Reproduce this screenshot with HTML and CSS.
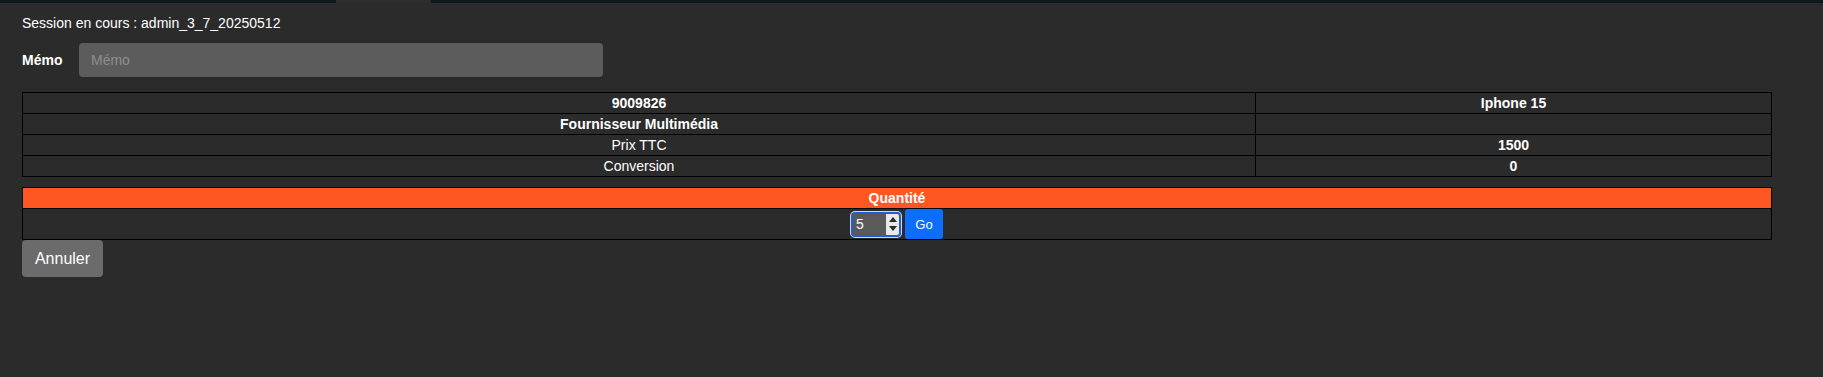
FILE: index.html
```html
<!DOCTYPE html>
<html lang="fr">
<head>
    <meta charset="UTF-8">
    <meta name="viewport" content="width=device-width, initial-scale=1.0">
    <title>Session</title>
    <link rel="stylesheet" href="styles.css">
</head>
<body>

    <div class="topbar">
        <div class="seg"></div>
        <div class="seg active"></div>
        <div class="seg rest"></div>
    </div>

    <div class="page">
        <div class="session">Session en cours : admin_3_7_20250512</div>

        <div class="memo-row">
            <label for="memo">Mémo</label>
            <input type="text" id="memo" class="memo-input" placeholder="Mémo">
        </div>

        <table class="info">
            <colgroup>
                <col class="col-main">
                <col>
            </colgroup>
            <tr><td class="b">9009826</td><td class="b">Iphone 15</td></tr>
            <tr><td class="b">Fournisseur Multimédia</td><td></td></tr>
            <tr><td>Prix TTC</td><td class="b">1500</td></tr>
            <tr><td>Conversion</td><td class="b">0</td></tr>
        </table>

        <table class="qty">
            <tr><th>Quantité</th></tr>
            <tr>
                <td>
                    <div class="qty-form">
                        <span class="num">
                            <input type="text" class="num-input" value="5">
                            <span class="spin">
                                <svg width="10" height="18" viewBox="0 0 10 18">
                                    <path d="M1 7 L5 2 L9 7 Z" fill="#2a2a2a"/>
                                    <path d="M1 11 L5 16 L9 11 Z" fill="#2a2a2a"/>
                                </svg>
                            </span>
                        </span>
                        <button class="btn-go">Go</button>
                    </div>
                </td>
            </tr>
        </table>

        <button class="btn-cancel">Annuler</button>
    </div>

</body>
</html>
```

FILE: styles.css
```css
body {
    margin: 0;
    background-color: #2b2b2b;
    color: white;
    font-family: "Liberation Sans", Arial, sans-serif;
    font-size: 14px;
}
.topbar {
    display: flex;
    height: 3px;
}
.seg { width: 336px; background: #0c1a1c; }
.seg.active { width: 95px; background: #2d2d2d; }
.seg.rest { flex: 1; }

.page { padding: 12px 0 0 22px; }
.session { line-height: 16px; }

.memo-row {
    display: flex;
    align-items: center;
    margin-top: 12px;
}
.memo-row label {
    width: 57px;
    font-weight: bold;
}
.memo-input {
    width: 524px;
    height: 34px;
    box-sizing: border-box;
    padding: 0 12px;
    background: #5c5c5c;
    border: none;
    border-radius: 4px;
    color: white;
    font-family: inherit;
    font-size: 14px;
}
.memo-input::placeholder { color: #8e8e8e; }

table {
    width: 1750px;
    border-collapse: collapse;
}
td, th {
    border: 1px solid #000;
    text-align: center;
    padding: 0;
    line-height: 20px;
}
.b { font-weight: bold; }
.info { margin-top: 15px; }
.col-main { width: 70.5%; }

.qty { margin-top: 10px; }
.qty th { background: #ff5722; font-weight: bold; }
.qty-form {
    display: flex;
    justify-content: center;
    align-items: center;
    gap: 4px;
    height: 30px;
}
.num {
    display: inline-flex;
    width: 50px;
    height: 25px;
    box-sizing: border-box;
    border: 2px solid #1d5fd2;
    border-radius: 4px;
    box-shadow: 0 0 0 1px #d8d8d8;
    overflow: hidden;
    background: #5a5a5a;
}
.num-input {
    width: 30px;
    border: none;
    padding: 0 0 0 3px;
    background: #5a5a5a;
    color: white;
    font-family: inherit;
    font-size: 14px;
    outline: none;
}
.spin {
    width: 16px;
    background: #e9e9e9;
    display: flex;
    align-items: center;
    justify-content: center;
}
.btn-go {
    width: 38px;
    height: 30px;
    border: none;
    border-radius: 3px;
    background: #0d6efd;
    color: white;
    font-family: inherit;
    font-size: 13px;
}
.btn-cancel {
    display: block;
    width: 81px;
    height: 37px;
    border: none;
    border-radius: 4px;
    background: #6b6b6b;
    color: white;
    font-family: inherit;
    font-size: 16px;
    cursor: pointer;
}
```
